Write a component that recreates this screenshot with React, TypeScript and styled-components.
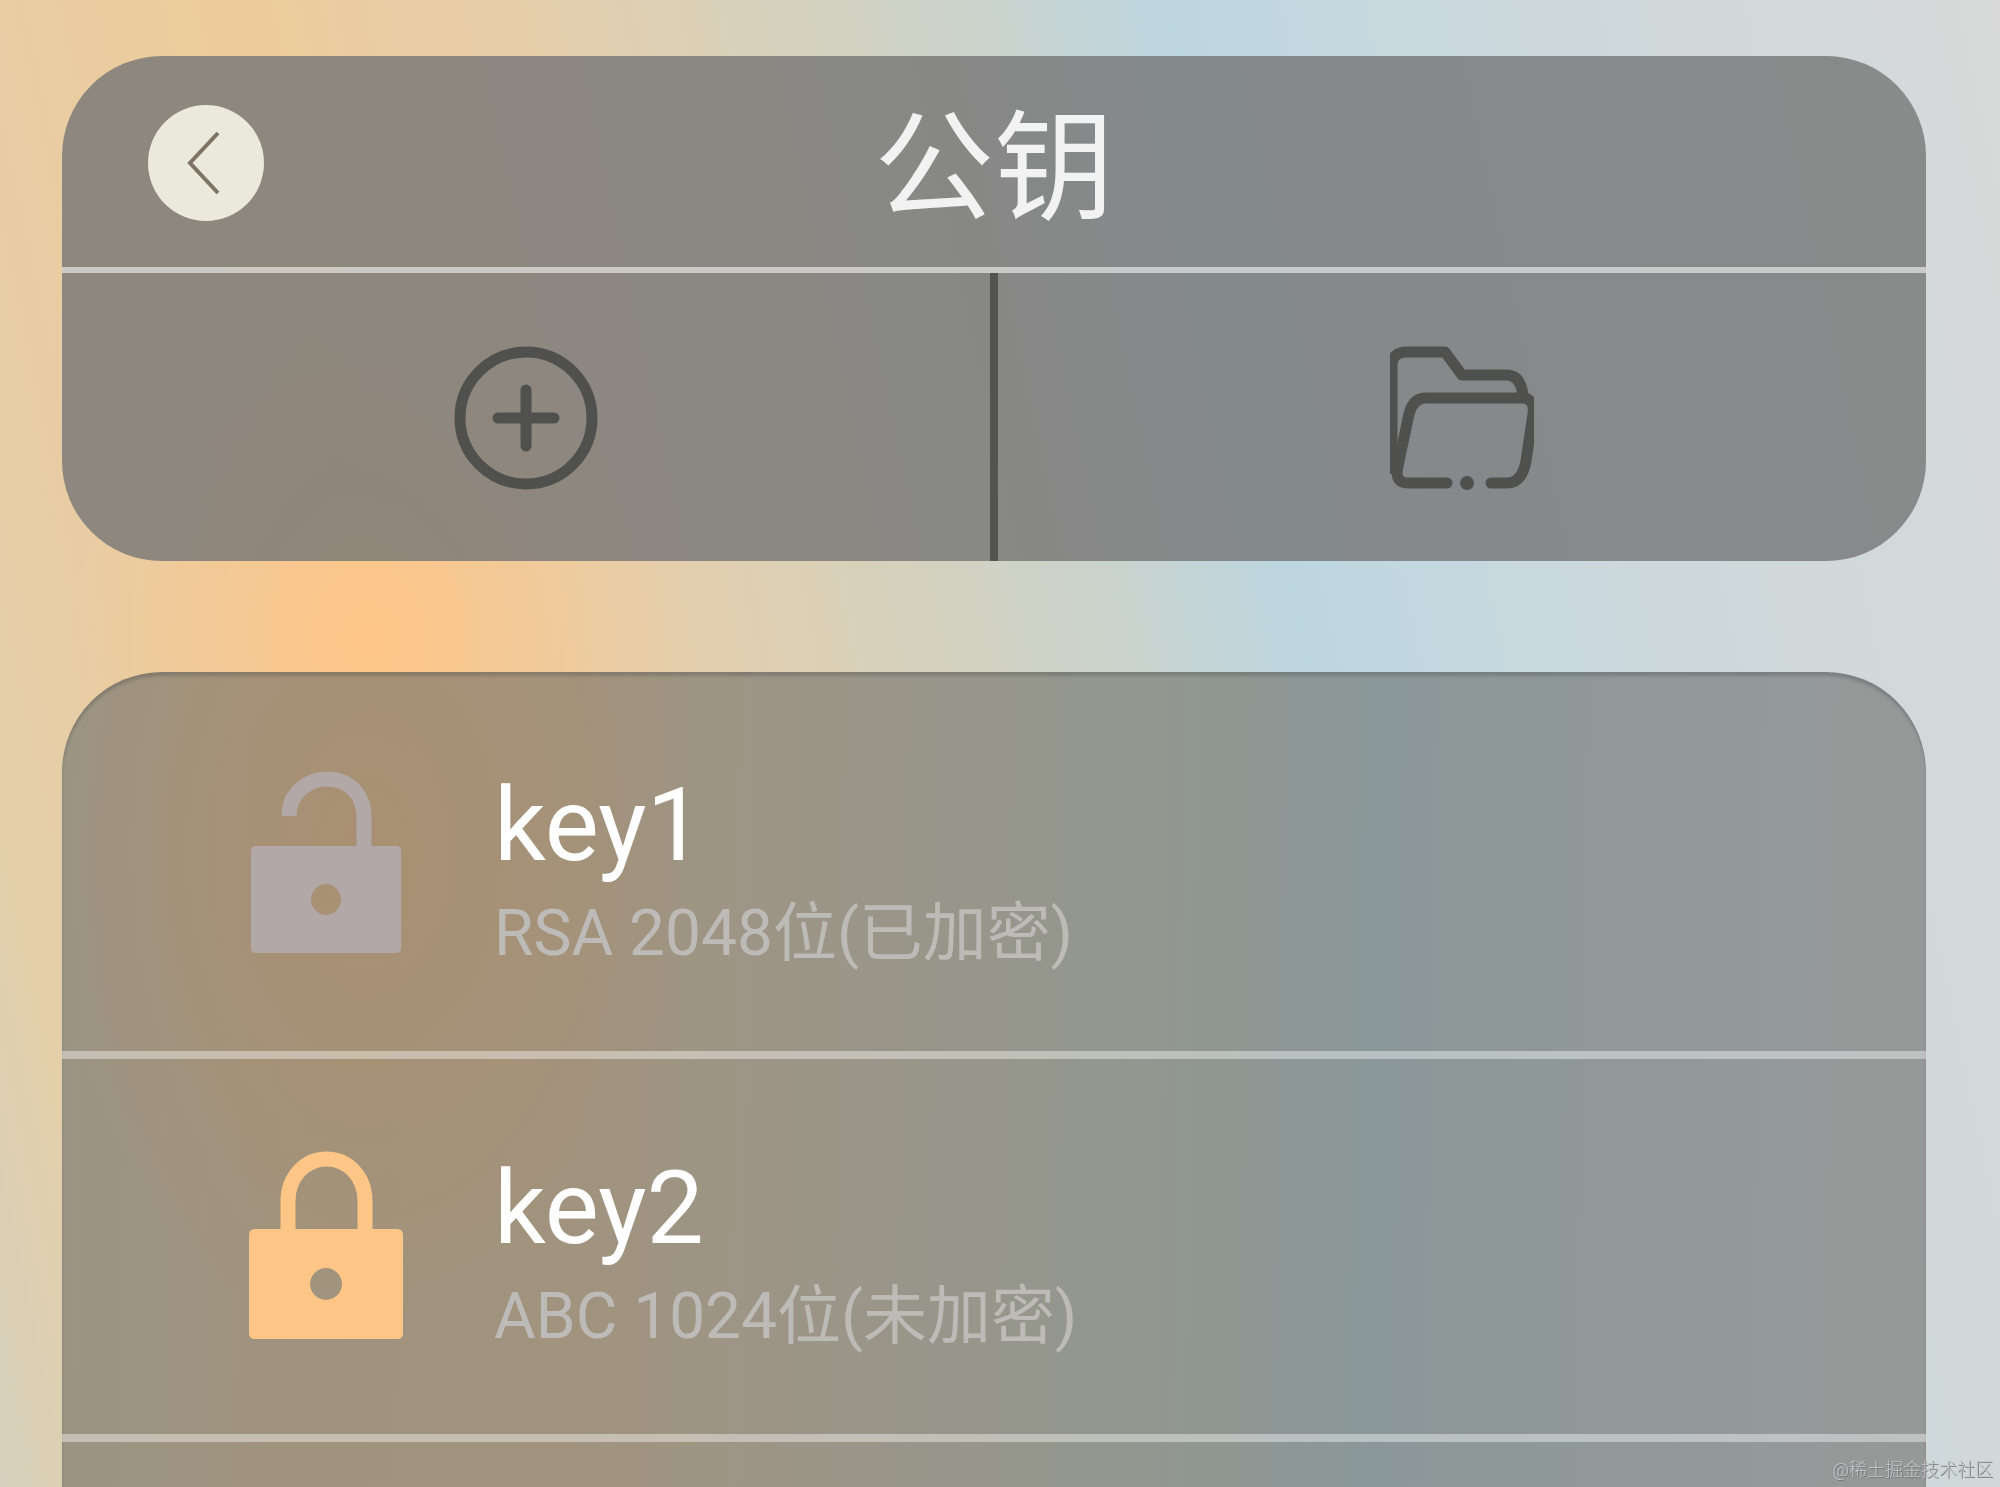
import React from 'react';
import styled, { createGlobalStyle } from 'styled-components';

const GlobalStyle = createGlobalStyle`
  *, *::before, *::after { box-sizing: border-box; }
  body {
    margin: 0;
    font-family: Roboto, 'Noto Sans CJK SC', sans-serif;
  }
`;

const Page = styled.main`
  display: flex;
  flex-direction: column;
  gap: 111px;
  height: 100vh;
  padding: 56px 74px 0 62px;
  overflow: hidden;
  background:
    radial-gradient(ellipse 300px 360px at 370px 640px, rgba(255, 197, 134, 0.95), rgba(255, 197, 134, 0.4) 50%, rgba(255, 197, 134, 0)),
    linear-gradient(
      78deg,
      #d5d0bc 0%,
      #e3cfaa 6%,
      #e8cda4 12%,
      #eecb9b 24%,
      #e6ceaa 36%,
      #d5d1bc 47%,
      #cad3cc 56%,
      #bcd6e0 64%,
      #c6d8df 72%,
      #ced8da 82%,
      #d4d9d9 94%,
      #d9d9d9 100%
    );
`;

const HeaderCard = styled.header`
  flex: none;
  border-radius: 100px;
  overflow: hidden;
  background: rgba(117, 117, 117, 0.8);
`;

const TitleBar = styled.div`
  display: grid;
  grid-template-columns: 1fr auto 1fr;
  align-items: center;
  height: 217px;
  padding: 2px 86px 0;
  border-bottom: 6px solid rgba(255, 255, 255, 0.55);
`;

const BackButton = styled.button`
  display: flex;
  align-items: center;
  justify-content: center;
  width: 116px;
  height: 116px;
  padding: 0;
  border: 0;
  border-radius: 50%;
  background: #ebe9dc;
  color: #7d7466;
  cursor: pointer;
`;

const Title = styled.h1`
  margin: 0;
  padding-top: 14px;
  color: #f2f2f2;
  font-size: 120px;
  font-weight: 400;
  line-height: 140px;
`;

const Toolbar = styled.nav`
  display: flex;
  height: 288px;
`;

const ToolButton = styled.button`
  display: flex;
  flex: 1;
  align-items: center;
  justify-content: center;
  padding: 2px 0 0;
  border: 0;
  background: transparent;
  color: #50514e;
  cursor: pointer;
`;

const ToolDivider = styled.span`
  width: 8px;
  background: #535451;
`;

const KeyList = styled.ul`
  flex: 1;
  margin: 0;
  padding: 4px 0 0;
  list-style: none;
  border-radius: 100px 100px 0 0;
  overflow: hidden;
  background:
    radial-gradient(ellipse 320px 480px at 300px 180px, rgba(170, 144, 113, 0.95), rgba(170, 144, 113, 0.5) 50%, rgba(170, 144, 113, 0)),
    linear-gradient(
      91deg,
      #9b9484 0%,
      #a0937d 14%,
      #a1937e 28%,
      #9c9586 38%,
      #97968a 48%,
      #92978f 58%,
      #8a9798 70%,
      #8f9899 80%,
      #949999 92%,
      #959a98 100%
    );
  box-shadow: inset 0 4px 3px rgba(70, 74, 74, 0.3);
`;

const KeyRow = styled.li`
  display: flex;
  align-items: center;
  gap: 90px;
  height: 383px;
  padding-left: 186px;
  border-bottom: 8px solid rgba(255, 255, 255, 0.4);
`;

const KeyText = styled.div`
  display: flex;
  flex-direction: column;
`;

const KeyName = styled.span`
  color: #fff;
  font-size: 102px;
  line-height: 140px;
`;

const KeyInfo = styled.span`
  color: #bdbbb8;
  font-size: 64px;
  line-height: 78px;
`;

const Watermark = styled.small`
  position: fixed;
  right: 7px;
  bottom: 4px;
  color: #c3c6c6;
  font-size: 18px;
  font-weight: 300;
  line-height: 26px;
  text-shadow: 1px 1px 0 #747777;
`;

const ChevronIcon = () => (
  <svg width="60" height="66" viewBox="0 0 60 66" fill="none" stroke="currentColor" strokeWidth="4" aria-hidden="true">
    <path d="M42 3 L14 33 L42 63" />
  </svg>
);

const PlusIcon = () => (
  <svg width="144" height="144" viewBox="0 0 144 144" fill="none" stroke="currentColor" strokeWidth="11" strokeLinecap="round" aria-hidden="true">
    <circle cx="72" cy="72" r="66" />
    <path d="M72 44 V100 M44 72 H100" />
  </svg>
);

const FolderIcon = () => (
  <svg width="144" height="144" viewBox="0 0 144 144" fill="none" stroke="currentColor" strokeWidth="11" strokeLinejoin="round" aria-hidden="true">
    <path d="M2 128 V20 Q2 6 17 6 H55 L72 29 H116 Q131 29 133 50" />
    <path d="M57 137 H18 Q4 137 8 120 L19 68 Q23 52 36 52 H134 Q145 54 143 68 L136 115 Q132 137 117 137 H101" strokeLinecap="round" />
    <circle cx="77" cy="137" r="7" fill="currentColor" stroke="none" />
  </svg>
);

const LockIcon = ({ open }: { open: boolean }) =>
  open ? (
    <svg width="156" height="192" viewBox="0 0 156 192" aria-hidden="true">
      <path d="M41 48 C41 25 60 11 79 11 C101 11 116 27 116 49 V84" fill="none" stroke="#b2a8a7" strokeWidth="15" />
      <path
        fill="#b2a8a7"
        fillRule="evenodd"
        d="M8 78 H148 Q153 78 153 83 V180 Q153 185 148 185 H8 Q3 185 3 180 V83 Q3 78 8 78 Z M78 116 a15 15.500 0 1 0 0.010 0 Z"
      />
    </svg>
  ) : (
    <svg width="156" height="192" viewBox="0 0 156 192" aria-hidden="true">
      <path d="M40 84 V50 C40 26 57 8 78.500 8 C100 8 117 26 117 50 V84" fill="none" stroke="#fec686" strokeWidth="15" />
      <path
        fill="#fec686"
        fillRule="evenodd"
        d="M7 78 H149 Q155 78 155 84 V182 Q155 188 149 188 H7 Q1 188 1 182 V84 Q1 78 7 78 Z M78 117 a16 16 0 1 0 0.010 0 Z"
      />
    </svg>
  );

const keys = [
  { name: 'key1', info: 'RSA 2048位(已加密)', open: true },
  { name: 'key2', info: 'ABC 1024位(未加密)', open: false },
];

export default function App() {
  return (
    <>
      <GlobalStyle />
      <Page>
        <HeaderCard>
          <TitleBar>
            <BackButton type="button" aria-label="返回">
              <ChevronIcon />
            </BackButton>
            <Title>公钥</Title>
          </TitleBar>
          <Toolbar>
            <ToolButton type="button" aria-label="添加">
              <PlusIcon />
            </ToolButton>
            <ToolDivider />
            <ToolButton type="button" aria-label="打开文件夹">
              <FolderIcon />
            </ToolButton>
          </Toolbar>
        </HeaderCard>
        <KeyList>
          {keys.map((key) => (
            <KeyRow key={key.name}>
              <LockIcon open={key.open} />
              <KeyText>
                <KeyName>{key.name}</KeyName>
                <KeyInfo>{key.info}</KeyInfo>
              </KeyText>
            </KeyRow>
          ))}
        </KeyList>
        <Watermark>@稀土掘金技术社区</Watermark>
      </Page>
    </>
  );
}
